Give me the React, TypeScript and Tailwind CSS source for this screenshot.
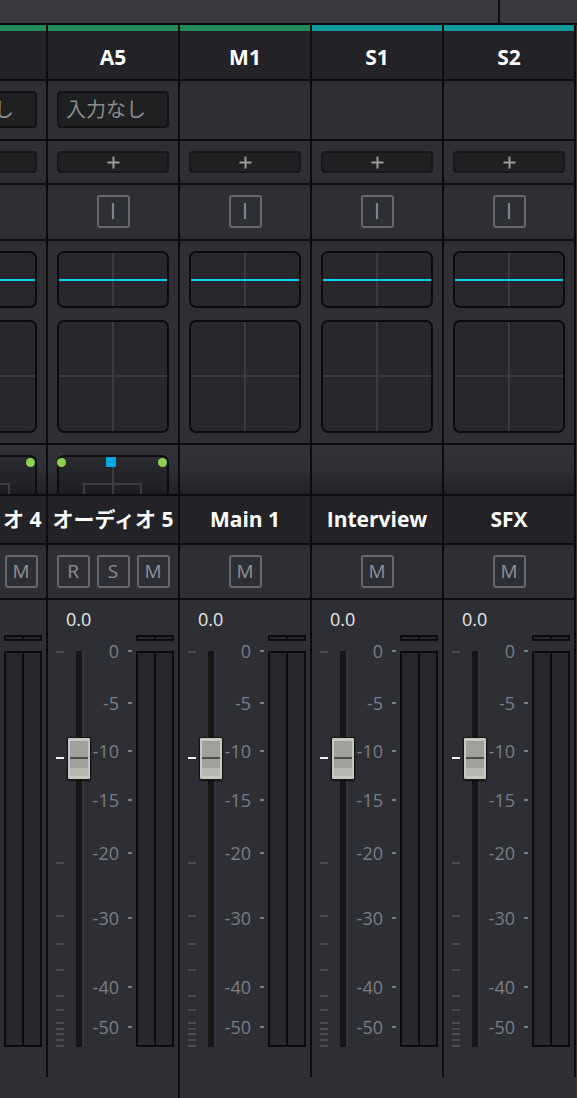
import React from "react";

type Col = {
  strip: string;
  header: string;
  input: boolean;
  fx: boolean;
  name: string;
  rsm: boolean;
  fullDivider: boolean;
};

const cols: Col[] = [
  { strip: "bg-[#218b5a]", header: "A4", input: true, fx: true, name: "オーディオ 4", rsm: true, fullDivider: false },
  { strip: "bg-[#218b5a]", header: "A5", input: true, fx: true, name: "オーディオ 5", rsm: true, fullDivider: false },
  { strip: "bg-[#218b5a]", header: "M1", input: false, fx: false, name: "Main 1", rsm: false, fullDivider: true },
  { strip: "bg-[#10999a]", header: "S1", input: false, fx: false, name: "Interview", rsm: false, fullDivider: false },
  { strip: "bg-[#10999a]", header: "S2", input: false, fx: false, name: "SFX", rsm: false, fullDivider: false },
];

const ticks = [0, 211, 264, 292, 318, 344, 358, 371, 377, 382, 388, 394];
const labels: [string, number][] = [
  ["0", 0],
  ["-5", 52],
  ["-10", 100],
  ["-15", 149],
  ["-20", 202],
  ["-30", 267],
  ["-40", 336],
  ["-50", 376],
];

function Line() {
  return <div className="h-[2px] shrink-0 bg-[#0c0c0e]" />;
}

function SqButton({ label }: { label: string }) {
  return (
    <div className="flex h-[33px] w-[33px] items-center justify-center rounded-[3px] border-2 border-[#67686d] text-[19px] leading-none text-[#8e8f93]">
      {label}
    </div>
  );
}

function Fader() {
  return (
    <div className="h-[498px] shrink-0 bg-[#2e2f35]">
      <div className="pl-[18px] pt-[9px] text-[18px] leading-[20px] text-[#e8e8e8]">0.0</div>
      <div className="mt-[22px] flex h-[396px]">
        <div className="relative ml-[8px] w-[8px]">
          {ticks.map((t) => (
            <div key={t} className="absolute left-0 h-[2px] w-[8px] bg-[#4b4c52]" style={{ top: t }} />
          ))}
          <div className="absolute left-0 top-[106px] h-[2px] w-[8px] bg-[#f2f2f2]" />
        </div>
        <div className="relative ml-[12px] w-[6px] bg-[#161617]">
          <div className="absolute left-[-9px] top-[86px] flex h-[43px] w-[24px] flex-col rounded-[2px] border border-[#141414] bg-[#c8c8c3] px-[2px] pb-[3px] pt-[3px] shadow-[0_1px_2px_rgba(0,0,0,0.6)]">
            <div className="flex flex-1 flex-col bg-[#a0a09c]">
              <div className="h-[16px]" />
              <div className="h-[2px] bg-[#4f4f4d]" />
              <div className="h-[9px]" />
              <div className="flex-1 bg-[#b9b9b4]" />
            </div>
          </div>
        </div>
        <div className="w-[2px] bg-[#34353b]" />
        <div className="relative w-[52px]">
          {labels.map(([l, y]) => (
            <React.Fragment key={l}>
              <div
                className="absolute right-[17px] whitespace-nowrap text-[18px] leading-[20px] text-[#7b7d84]"
                style={{ top: y - 10 }}
              >
                {l}
              </div>
              <div className="absolute left-[44px] h-[2px] w-[4px] bg-[#7b7d84]" style={{ top: y - 1 }} />
            </React.Fragment>
          ))}
        </div>
        <div className="relative flex w-[38px] border-2 border-[#0c0c0e]">
          <div className="absolute left-[-2px] top-[-18px] flex h-[6px] w-[38px] border-2 border-[#0c0c0e]">
            <div className="flex-1 bg-[#2a2b30]" />
            <div className="w-[2px] bg-[#0c0c0e]" />
            <div className="flex-1 bg-[#2a2b30]" />
          </div>
          <div className="flex-1 bg-[#27282d]" />
          <div className="w-[2px] bg-[#0c0c0e]" />
          <div className="flex-1 bg-[#27282d]" />
        </div>
      </div>
    </div>
  );
}

function Column({ c }: { c: Col }) {
  return (
    <div className="flex w-[132px] shrink-0">
      <div className="flex w-[2px] flex-col">
        <div className="flex-1 bg-[#0c0c0e]" />
        <div className={c.fullDivider ? "h-[21px] bg-[#0c0c0e]" : "h-[21px] bg-[#2e2f35]"} />
      </div>
      <div className="flex w-[130px] flex-col overflow-hidden">
        <div className={`h-[6px] shrink-0 ${c.strip}`} />
        <div className="flex h-[48px] shrink-0 items-center justify-center bg-[#222227] pt-[5px] text-[21px] font-bold text-white">
          {c.header}
        </div>
        <Line />
        <div className="h-[58px] shrink-0 bg-[#2e2f35] px-[9px] pt-[10px]">
          {c.input && (
            <div className="flex h-[37px] items-center whitespace-nowrap rounded-[4px] border-2 border-[#131415] bg-[#1f2022] pl-[7px] text-[20px] leading-none text-[#8c8c8c]">
              入力なし
            </div>
          )}
        </div>
        <Line />
        <div className="h-[42px] shrink-0 bg-[#2e2f35] px-[9px] pt-[10px]">
          <div className="flex h-[22px] items-center justify-center rounded-[4px] border-2 border-[#161718] bg-[#1f2022]">
            <svg width="13" height="13" viewBox="0 0 13 13">
              <path d="M6.5 0.5v12M0.5 6.5h12" stroke="#9a9a9a" strokeWidth="2" />
            </svg>
          </div>
        </div>
        <Line />
        <div className="flex h-[54px] shrink-0 justify-center bg-[#2e2f35] pt-[10px]">
          <div className="flex h-[33px] w-[33px] items-center justify-center rounded-[3px] border-2 border-[#67686d] font-['Open_Sans',sans-serif] text-[21px] leading-none text-[#8e8f93]">
            I
          </div>
        </div>
        <Line />
        <div className="flex h-[202px] shrink-0 flex-col bg-[#2e2f35] px-[9px] pt-[10px]">
          <div className="relative h-[57px] rounded-[7px] border-2 border-[#0c0c0e] bg-[#27282d]">
            <div className="absolute bottom-0 left-[53px] top-0 w-[2px] bg-[#3b3c41]" />
            <div className="absolute left-0 right-0 top-[26px] h-[2px] bg-[#0ad2ec]" />
          </div>
          <div className="relative mt-[12px] h-[113px] rounded-[7px] border-2 border-[#0c0c0e] bg-[#27282d]">
            <div className="absolute bottom-0 left-[53px] top-0 w-[2px] bg-[#3b3c41]" />
            <div className="absolute left-0 right-0 top-[53px] h-[2px] bg-[#3b3c41]" />
          </div>
        </div>
        <Line />
        <div className="h-[49px] shrink-0 bg-linear-to-b from-[#313238] via-[#2e2f35] to-[#222328] px-[9px] pt-[10px]">
          {c.fx && (
            <div className="relative h-[39px] rounded-t-[7px] border-2 border-b-0 border-[#0c0c0e] bg-linear-to-b from-[#2a2b30] to-[#1d1e22]">
              <div className="absolute left-[53px] top-[10px] bottom-0 w-[2px] bg-[#3c3d42]" />
              <div className="absolute left-[24px] top-[26px] h-[2px] w-[59px] bg-[#3c3d42]" />
              <div className="absolute left-[24px] top-[26px] bottom-0 w-[2px] bg-[#3c3d42]" />
              <div className="absolute left-[81px] top-[26px] bottom-0 w-[2px] bg-[#3c3d42]" />
              <div className="absolute left-[-2px] top-[1px] h-[9px] w-[9px] rounded-full bg-[#8ed14e]" />
              <div className="absolute right-0 top-[1px] h-[9px] w-[9px] rounded-full bg-[#8ed14e]" />
              <div className="absolute left-[47px] top-0 h-[10px] w-[10px] bg-[#00a9e0]" />
            </div>
          )}
        </div>
        <Line />
        <div className="flex h-[47px] shrink-0 items-center justify-center whitespace-nowrap bg-[#222227] text-[21px] font-bold text-white">
          {c.name}
        </div>
        <Line />
        <div className="flex h-[53px] shrink-0 justify-center gap-[7px] bg-[#2e2f35] pt-[10px]">
          {c.rsm ? (
            <>
              <SqButton label="R" />
              <SqButton label="S" />
              <SqButton label="M" />
            </>
          ) : (
            <SqButton label="M" />
          )}
        </div>
        <Line />
        <Fader />
      </div>
    </div>
  );
}

export default function App() {
  return (
    <div className="h-[1098px] w-[577px] overflow-hidden bg-[#2e2f35] font-['Open_Sans','Noto_Sans_CJK_JP',sans-serif]">
      <div className="flex h-[23px] bg-[#393a40]">
        <div className="w-[498px]" />
        <div className="w-[2px] bg-[#0c0c0e]" />
      </div>
      <div className="h-[2px] bg-[#0c0c0e]" />
      <div className="ml-[-86px] flex h-[1073px]">
        {cols.map((c) => (
          <Column key={c.header} c={c} />
        ))}
        <div className="flex w-[2px] shrink-0 flex-col">
          <div className="flex-1 bg-[#0c0c0e]" />
          <div className="h-[21px] bg-[#2e2f35]" />
        </div>
        <div className="w-[1px] shrink-0 bg-[#4a3519]" />
      </div>
    </div>
  );
}
